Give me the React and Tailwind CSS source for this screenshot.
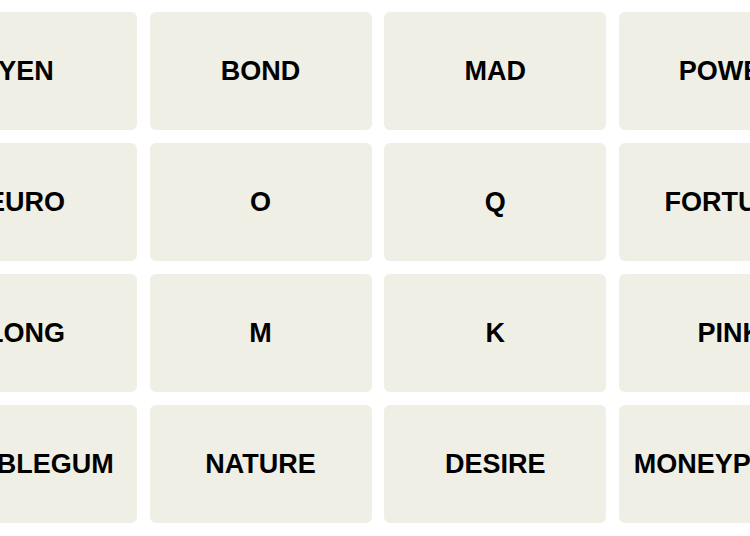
const words = [
  "YEN", "BOND", "MAD", "POWER",
  "EURO", "O", "Q", "FORTUNE",
  "LONG", "M", "K", "PINK",
  "BUBBLEGUM", "NATURE", "DESIRE", "MONEYPENNY",
];

export default function App() {
  return (
    <div className="h-[536px] w-[750px] overflow-hidden bg-white">
      <div className="ml-[-85px] mt-[12px] grid w-[926px] grid-cols-[222px_222px_222px_222px] gap-x-[12.6px] gap-y-[13px]">
        {words.map((word) => (
          <button
            key={word}
            className="flex h-[118px] items-center justify-center rounded-[6px] bg-[#efefe6] text-[27px] font-bold text-black whitespace-nowrap"
            style={{ fontFamily: "'Liberation Sans', Arial, sans-serif" }}
          >
            {word}
          </button>
        ))}
      </div>
    </div>
  );
}
